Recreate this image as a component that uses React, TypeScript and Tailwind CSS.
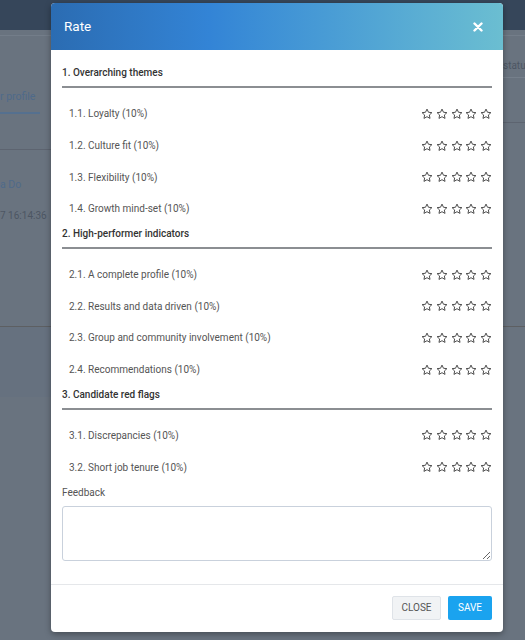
import * as React from "react";

const sections = [
  {
    title: "1. Overarching themes",
    items: ["1.1. Loyalty (10%)", "1.2. Culture fit (10%)", "1.3. Flexibility (10%)", "1.4. Growth mind-set (10%)"],
  },
  {
    title: "2. High-performer indicators",
    items: [
      "2.1. A complete profile (10%)",
      "2.2. Results and data driven (10%)",
      "2.3. Group and community involvement (10%)",
      "2.4. Recommendations (10%)",
    ],
  },
  {
    title: "3. Candidate red flags",
    items: ["3.1. Discrepancies (10%)", "3.2. Short job tenure (10%)"],
  },
];

function Star() {
  return (
    <svg width="12" height="12" viewBox="0 0 24 24" fill="none" stroke="#444" strokeWidth="1.9" strokeLinejoin="round">
      <path d="M12 2.2l2.95 6.3 6.85.8-5.1 4.7 1.35 6.8L12 17.4l-6.05 3.4 1.35-6.8-5.1-4.7 6.85-.8z" />
    </svg>
  );
}

function Stars() {
  return (
    <div className="flex items-center gap-[2.75px]">
      {[0, 1, 2, 3, 4].map((i) => (
        <Star key={i} />
      ))}
    </div>
  );
}

function Background() {
  return (
    <div className="flex flex-col h-[640px] w-[525px] bg-[#69737f] text-[10px]">
      <div className="h-[30px] bg-[#36465a] shrink-0" />
      <div className="h-[6px] border-b border-[#737d89] shrink-0" />
      <div className="flex">
        <div className="w-[51px] flex flex-col">
          <div className="h-[50px]" />
          <div className="text-[#4f6a8a] text-[10.5px] h-[22px] flex items-center whitespace-nowrap">r profile</div>
          <div className="h-[2px] w-[40px] bg-[#55708f] mt-[4px]" />
          <div className="h-[35px]" />
          <div className="h-px bg-[#5d6470]" />
          <div className="h-[26px]" />
          <div className="text-[#4f6a8a] text-[10.5px] h-[18px] flex items-center">a Do</div>
          <div className="h-[12px]" />
          <div className="text-[#4d5663] whitespace-nowrap h-[18px] flex items-center">7 16:14:36</div>
          <div className="h-[102px]" />
          <div className="h-px bg-[#5d5f62]" />
          <div className="h-[70px] bg-[#66717f]" />
        </div>
        <div className="flex-1" />
        <div className="w-[22px] flex flex-col overflow-hidden">
          <div className="h-[19px]" />
          <div className="h-[20px] flex items-center text-[#4d5663] whitespace-nowrap">statu</div>
          <div className="h-px bg-[#757f8b] mt-[2px]" />
          <div className="h-[44px]" />
          <div className="h-px bg-[#5d6470]" />
          <div className="h-[203px]" />
          <div className="h-px bg-[#5d5f62]" />
        </div>
      </div>
    </div>
  );
}

export default function App() {
  return (
    <div className="relative w-[525px] h-[640px] overflow-hidden" style={{ fontFamily: "Roboto, 'Liberation Sans', sans-serif" }}>
      <Background />
      <div className="absolute left-[51px] top-[3px] w-[452px] bg-white rounded-[4px] shadow-[0_2px_6px_rgba(0,0,0,0.35)] overflow-hidden">
        <div className="h-[47px] flex items-center justify-between pl-[13px] pr-[20px] bg-gradient-to-r from-[#2b6cb2] via-[#3384d6] via-[35%] to-[#6bbed1]">
          <span className="text-white text-[13.5px]">Rate</span>
          <svg width="10" height="10" viewBox="0 0 10 10" stroke="white" strokeWidth="2.4" strokeLinecap="round">
            <path d="M1.5 1.5l7 7M8.5 1.5l-7 7" />
          </svg>
        </div>
        <div className="px-[11px] pt-[14px]">
          {sections.map((s) => (
            <div key={s.title}>
              <div className="pt-[1px] text-[10px] font-medium text-[#333] leading-[16px] pb-[5px] border-b-2 border-[#8b8e92]">{s.title}</div>
              <div className="pt-[10px] pl-[7px]">
                {s.items.map((it) => (
                  <div key={it} className="h-[31.7px] flex items-center justify-between">
                    <span className="text-[10px] text-[#555]">{it}</span>
                    <Stars />
                  </div>
                ))}
              </div>
            </div>
          ))}
          <div className="text-[10px] text-[#555] mt-[3px] leading-[14px]">Feedback</div>
          <textarea className="mt-[6px] w-full h-[55px] border border-[#c9d1dc] rounded-[3px] block resize-y" />
        </div>
        <div className="mt-[23px] border-t border-[#e5e7ea] flex justify-end gap-[7px] px-[11px] pt-[11px] pb-[12px]">
          <button className="h-[24px] w-[49px] bg-[#f1f3f5] border border-[#dfe3e8] rounded-[2px] text-[10px] text-[#555]">CLOSE</button>
          <button className="h-[24px] w-[44px] bg-[#1aa3ef] rounded-[2px] text-[10px] text-white">SAVE</button>
        </div>
      </div>
    </div>
  );
}
